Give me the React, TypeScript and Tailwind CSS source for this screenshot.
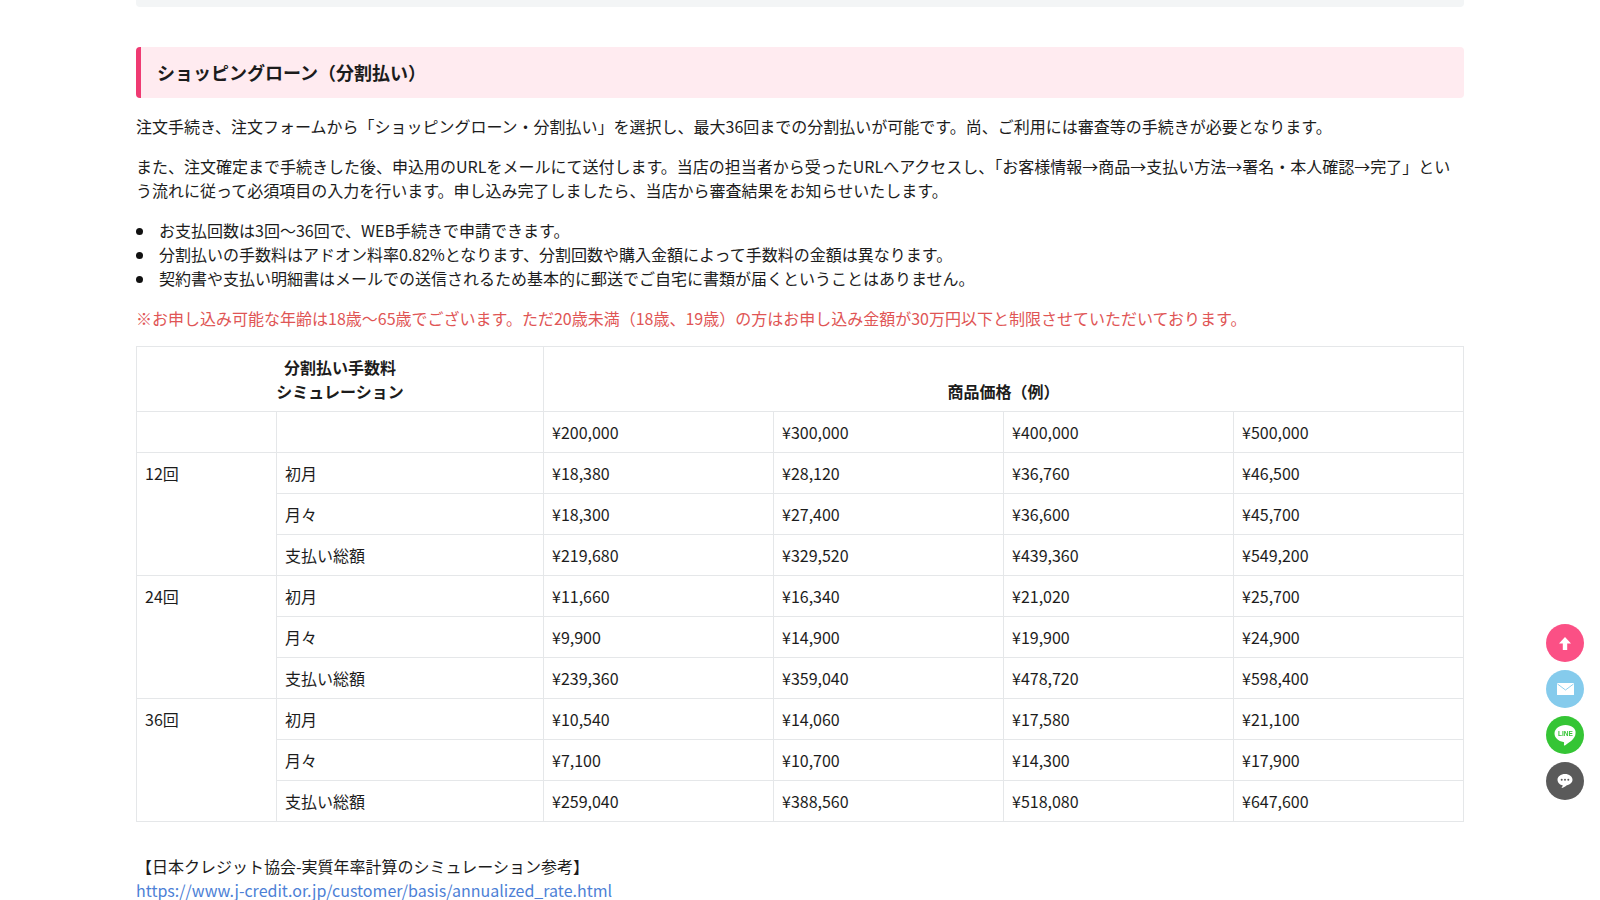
import React from "react";

const font = '"Noto Sans CJK JP", "Noto Sans", sans-serif';

const groups = [
  {
    label: "12回",
    rows: [
      ["初月", "¥18,380", "¥28,120", "¥36,760", "¥46,500"],
      ["月々", "¥18,300", "¥27,400", "¥36,600", "¥45,700"],
      ["支払い総額", "¥219,680", "¥329,520", "¥439,360", "¥549,200"],
    ],
  },
  {
    label: "24回",
    rows: [
      ["初月", "¥11,660", "¥16,340", "¥21,020", "¥25,700"],
      ["月々", "¥9,900", "¥14,900", "¥19,900", "¥24,900"],
      ["支払い総額", "¥239,360", "¥359,040", "¥478,720", "¥598,400"],
    ],
  },
  {
    label: "36回",
    rows: [
      ["初月", "¥10,540", "¥14,060", "¥17,580", "¥21,100"],
      ["月々", "¥7,100", "¥10,700", "¥14,300", "¥17,900"],
      ["支払い総額", "¥259,040", "¥388,560", "¥518,080", "¥647,600"],
    ],
  },
];

const td = "border border-[#e5e7e9] px-2 py-2 align-top";
const li =
  "relative before:absolute before:top-[10px] before:left-[-23px] before:h-[7px] before:w-[7px] before:rounded-full before:bg-[#111111] before:content-['']";

export default function App() {
  return (
    <div
      className="h-[900px] overflow-hidden bg-white text-[16px] leading-[24px] text-[#1c1c1c]"
      style={{ fontFamily: font }}
    >
      <div className="mx-auto w-[1328px]">
        <div className="h-[7px] rounded-b-[4px] bg-[#f3f5f6]" />
        <h2 className="mt-[40px] rounded-[4px] border-l-[5px] border-[#ef3a72] bg-[#ffebf0] py-3 pl-4 text-[18px] leading-[27px] font-bold">
          ショッピングローン（分割払い）
        </h2>
        <p className="mt-4">
          注文手続き、注文フォームから「ショッピングローン・分割払い」を選択し、最大36回までの分割払いが可能です。尚、ご利用には審査等の手続きが必要となります。
        </p>
        <p className="mt-4">
          また、注文確定まで手続きした後、申込用のURLをメールにて送付します。当店の担当者から受ったURLへアクセスし、「お客様情報→商品→支払い方法→署名・本人確認→完了」という流れに従って必須項目の入力を行います。申し込み完了しましたら、当店から審査結果をお知らせいたします。
        </p>
        <ul className="mt-4 list-none pl-[23px]">
          <li className={li}>お支払回数は3回～36回で、WEB手続きで申請できます。</li>
          <li className={li}>分割払いの手数料はアドオン料率0.82%となります、分割回数や購入金額によって手数料の金額は異なります。</li>
          <li className={li}>契約書や支払い明細書はメールでの送信されるため基本的に郵送でご自宅に書類が届くということはありません。</li>
        </ul>
        <p className="mt-4 text-[#e05555]">
          ※お申し込み可能な年齢は18歳～65歳でございます。ただ20歳未満（18歳、19歳）の方はお申し込み金額が30万円以下と制限させていただいております。
        </p>
        <table className="mt-4 w-[1327px] table-fixed border-collapse">
          <colgroup>
            <col className="w-[140px]" />
            <col className="w-[267px]" />
            <col className="w-[230px]" />
            <col className="w-[230px]" />
            <col className="w-[230px]" />
            <col className="w-[230px]" />
          </colgroup>
          <thead>
            <tr>
              <th colSpan={2} className={`${td} text-center font-bold`}>
                分割払い手数料
                <br />
                シミュレーション
              </th>
              <th colSpan={4} className="border border-[#e5e7e9] px-2 py-2 text-center align-bottom font-bold">
                商品価格（例）
              </th>
            </tr>
          </thead>
          <tbody>
            <tr>
              <td className={td} />
              <td className={td} />
              <td className={td}>¥200,000</td>
              <td className={td}>¥300,000</td>
              <td className={td}>¥400,000</td>
              <td className={td}>¥500,000</td>
            </tr>
            {groups.map((g) =>
              g.rows.map((r, i) => (
                <tr key={g.label + i}>
                  {i === 0 && (
                    <td rowSpan={3} className={td}>
                      {g.label}
                    </td>
                  )}
                  {r.map((c, j) => (
                    <td key={j} className={td}>
                      {c}
                    </td>
                  ))}
                </tr>
              ))
            )}
          </tbody>
        </table>
        <p className="mt-[32px]">
          【日本クレジット協会-実質年率計算のシミュレーション参考】
          <br />
          <a className="text-[#4d7fd6]">https://www.j-credit.or.jp/customer/basis/annualized_rate.html</a>
        </p>
      </div>

      <div className="fixed top-[624px] right-[16px] flex flex-col gap-2">
        <div className="flex h-[38px] w-[38px] items-center justify-center rounded-full bg-[#fb5085]">
          <svg width="12" height="13" viewBox="0 0 12 13" fill="#ffffff">
            <path d="M6 0 12 6.500H8.200V13H3.800V6.500H0Z" />
          </svg>
        </div>
        <div className="flex h-[38px] w-[38px] items-center justify-center rounded-full bg-[#85cbec]">
          <svg width="17" height="12" viewBox="0 0 17 12">
            <rect width="17" height="12" rx="0.5" fill="#ffffff" />
            <path d="M0.500 1 8.500 7 16.500 1" fill="none" stroke="#85cbec" strokeWidth="0.9" />
          </svg>
        </div>
        <div className="flex h-[38px] w-[38px] items-center justify-center rounded-full bg-[#35c535]">
          <svg width="23" height="23" viewBox="0 0 23 23">
            <path d="M11.500 1C5.400 1 .5 4.800.5 9.600c0 4.200 3.800 7.700 8.900 8.400.6.100.8.500.7 1.100l-.2 1.700c-.1.700.4 1 1 .6 3.300-2 10.600-6.400 10.600-11.800C22.500 4.800 17.600 1 11.500 1Z" fill="#ffffff" />
            <text x="11.500" y="12" textAnchor="middle" fontSize="6.500" fontWeight="700" fill="#35c535" fontFamily='"Liberation Sans", sans-serif'>LINE</text>
          </svg>
        </div>
        <div className="flex h-[38px] w-[38px] items-center justify-center rounded-full bg-[#5a5a5a]">
          <svg width="16" height="16" viewBox="0 0 16 16">
            <path d="M8 1C3.800 1 .5 3.500.5 6.700c0 2.900 2.600 5.200 5.200 5.500-.1 1-.6 2-1.300 2.800 1.900-.3 3.900-1.400 5.400-2.800 3.200-.6 5.700-2.700 5.700-5.500C15.500 3.500 12.200 1 8 1Z" fill="#ffffff" />
            <circle cx="4.700" cy="6.800" r="1" fill="#5a5a5a" />
            <circle cx="8" cy="6.800" r="1" fill="#5a5a5a" />
            <circle cx="11.300" cy="6.800" r="1" fill="#5a5a5a" />
          </svg>
        </div>
      </div>
    </div>
  );
}
